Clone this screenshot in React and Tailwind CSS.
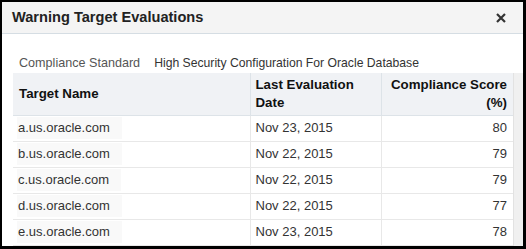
import React from 'react';

const rows = [
  { name: 'a.us.oracle.com', date: 'Nov 23, 2015', score: 80 },
  { name: 'b.us.oracle.com', date: 'Nov 22, 2015', score: 79 },
  { name: 'c.us.oracle.com', date: 'Nov 22, 2015', score: 79 },
  { name: 'd.us.oracle.com', date: 'Nov 22, 2015', score: 77 },
  { name: 'e.us.oracle.com', date: 'Nov 23, 2015', score: 78 },
];

const App = () => {
  return (
    <div
      className="w-[526px] h-[249px] bg-black p-[2px] pr-[3px] pb-[3px] overflow-hidden"
      style={{ fontFamily: '"Liberation Sans", Arial, sans-serif' }}
    >
      <div className="h-full bg-white flex flex-col overflow-hidden">
        <header className="h-[32px] shrink-0 bg-[#f4f4f4] border-b border-[#d5dde3] flex items-center justify-between pl-[10px] pr-[17px]">
          <h1 className="text-[14.6px] font-bold text-[#222]">Warning Target Evaluations</h1>
          <button className="leading-none">
            <svg width="10" height="10" viewBox="0 0 10 10">
              <path d="M1 1 L9 9 M9 1 L1 9" stroke="#333" strokeWidth="2.2" />
            </svg>
          </button>
        </header>

        <div className="flex-1 flex pl-[11px] pt-[19px] min-h-0">
          <div className="flex-1 flex flex-col min-h-0">
            <div className="flex items-center gap-[14px] pl-[6px] h-[20px]">
              <span className="text-[12.6px] text-[#555]">Compliance Standard</span>
              <span className="text-[12.2px] text-[#333]">High Security Configuration For Oracle Database</span>
            </div>
            <div className="flex flex-1 min-h-0">
              <table className="w-[500px] border-collapse text-[13px] text-[#333] self-start">
                <thead>
                  <tr className="bg-[#f0f2f5] h-[42px] border-b border-[#dde3e8]">
                    <th className="w-[237px] text-left font-bold text-[13.3px] text-[#111] pl-[6px] leading-[18px] border-r border-[#dde3e8]">
                      Target Name
                    </th>
                    <th className="w-[131px] text-left font-bold text-[13.3px] text-[#111] pl-[5px] leading-[18px] border-r border-[#dde3e8]">
                      Last Evaluation
                      <br />
                      Date
                    </th>
                    <th className="text-right font-bold text-[13.3px] text-[#111] pr-[6px] leading-[18px]">
                      Compliance Score
                      <br />
                      (%)
                    </th>
                  </tr>
                </thead>
                <tbody>
                  {rows.map((r) => (
                    <tr key={r.name} className="h-[26px] border-b border-[#e8e8e8]">
                      <td className="pl-[4px] border-r border-[#e8e8e8]">
                        <span className="inline-block bg-[#f9f9f9] pl-[1px] pr-[12px] leading-[22px]">{r.name}</span>
                      </td>
                      <td className="pl-[5px] border-r border-[#e8e8e8]">{r.date}</td>
                      <td className="text-right pr-[6px]">{r.score}</td>
                    </tr>
                  ))}
                </tbody>
              </table>
              <div className="w-[10px] bg-[#f0f0f0] border-l border-[#e2e2e2]" />
            </div>
          </div>
        </div>
      </div>
    </div>
  );
};

export default App;
